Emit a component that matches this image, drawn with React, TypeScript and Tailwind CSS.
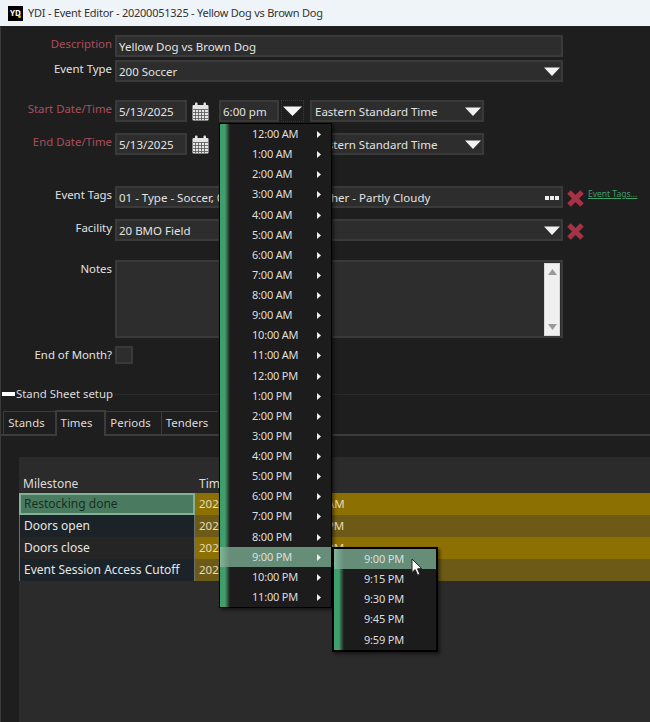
import React from 'react';

const hours = [
  '12:00 AM', '1:00 AM', '2:00 AM', '3:00 AM', '4:00 AM', '5:00 AM', '6:00 AM', '7:00 AM',
  '8:00 AM', '9:00 AM', '10:00 AM', '11:00 AM', '12:00 PM', '1:00 PM', '2:00 PM', '3:00 PM',
  '4:00 PM', '5:00 PM', '6:00 PM', '7:00 PM', '8:00 PM', '9:00 PM', '10:00 PM', '11:00 PM',
];
const minutes = ['9:00 PM', '9:15 PM', '9:30 PM', '9:45 PM', '9:59 PM'];

const milestones = [
  { name: 'Restocking done', time: '2025-05-13 10:00:00.00 AM', cls: 'bg-[#8c7002]' },
  { name: 'Doors open', time: '2025-05-13 10:00:00.00 PM', cls: 'bg-[#6c5a16]' },
  { name: 'Doors close', time: '2025-05-13 10:00:00.00 PM', cls: 'bg-[#8c7002]' },
  { name: 'Event Session Access Cutoff', time: '2025-05-13 10:00:00.00 PM', cls: 'bg-[#6c5a16]' },
];

function Caret({ big }: { big?: boolean }) {
  return big ? (
    <svg width="19" height="10" viewBox="0 0 19 10" className="shrink-0">
      <polygon points="0,0.5 19,0.5 9.5,10" fill="#f6f6f6" />
    </svg>
  ) : (
    <svg width="16" height="9" viewBox="0 0 16 9" className="shrink-0">
      <polygon points="0,0.5 16,0.5 8,9" fill="#f2f2f2" />
    </svg>
  );
}

function RedX() {
  return (
    <svg width="19" height="19" viewBox="0 0 19 19" className="shrink-0">
      <path d="M3 3 L16 16 M16 3 L3 16" stroke="#a63246" strokeWidth="5" />
    </svg>
  );
}

function CalendarIcon() {
  return (
    <svg width="17" height="19" viewBox="0 0 17 19" className="shrink-0">
      <rect x="0.5" y="3" width="16" height="15.5" rx="1" fill="#e4e4e4" />
      <rect x="3" y="0.5" width="2.5" height="4.5" rx="1" fill="#e4e4e4" />
      <rect x="11.5" y="0.5" width="2.5" height="4.5" rx="1" fill="#e4e4e4" />
      <path
        d="M1 7.5H16M1 10.5H16M1 13.5H16M1 16.5H16M3.5 7V18M6.5 7V18M9.5 7V18M12.5 7V18"
        stroke="#555"
        strokeWidth="0.8"
      />
    </svg>
  );
}

function Field({ className, children }: { className?: string; children?: React.ReactNode }) {
  return (
    <div
      className={`flex items-center justify-between h-[22px] bg-[#2d2d2d] border-2 border-[#3a3a3a] pl-[1px] pr-[1px] pt-[1px] text-[11.5px] text-[#e2e2e2] whitespace-nowrap overflow-hidden ${className ?? ''}`}
    >
      {children}
    </div>
  );
}

function Row({
  label,
  danger,
  className,
  children,
}: {
  label: string;
  danger?: boolean;
  className?: string;
  children: React.ReactNode;
}) {
  return (
    <div className={`flex items-start ${className ?? ''}`}>
      <div
        className={`w-[112px] shrink-0 text-right text-[11.4px] leading-[18px] whitespace-nowrap ${danger ? 'text-[#a9505e]' : 'text-[#e2e2e2]'}`}
      >
        {label}
      </div>
      <div className="ml-[3px] flex items-start">{children}</div>
    </div>
  );
}

function Tab({ label, active, className }: { label: string; active?: boolean; className?: string }) {
  return (
    <div
      className={`flex items-center justify-center text-[11.4px] text-[#dcdcdc] border-[#3c3c3c] ${
        active
          ? 'h-[26px] border-t-2 border-x-2 -mb-[2px] relative z-10 bg-[#1e1e1e] pb-[3px] pr-[8px]'
          : 'h-[23px] border-t pr-[6px]'
      } ${className ?? ''}`}
    >
      {label}
    </div>
  );
}

export default function App() {
  return (
    <div className="relative w-[650px] h-[722px] overflow-hidden bg-[#1e1e1e] shadow-[inset_1px_0_0_#3a3a3a] font-['Noto_Sans',sans-serif] text-[12px] leading-[18px]">
      {/* title bar */}
      <div className="flex items-center h-[27px] bg-[#eff4f9] border-b border-[#222] pl-[8px] text-[#333] text-[11px] tracking-[-0.24px]">
        <div className="relative flex items-center justify-center w-[15px] h-[15px] bg-black text-white text-[8px] leading-none font-bold tracking-normal">
          YD
          <i className="absolute right-[2px] bottom-[3px] w-[3px] h-[3px] rounded-full bg-[#e6c422]" />
        </div>
        <span className="ml-[5px] whitespace-nowrap">YDI - Event Editor - 20200051325 - Yellow Dog vs Brown Dog</span>
      </div>

      {/* form */}
      <div className="pt-[8px]">
        <Row label="Description" danger>
          <Field className="w-[448px]">
            <span className="pl-[1px]">Yellow Dog vs Brown Dog</span>
          </Field>
        </Row>
        <Row label="Event Type" className="mt-[3px]">
          <Field className="w-[448px]">
            <span className="pl-[1px]">200 Soccer</span>
            <Caret />
          </Field>
        </Row>
        <Row label="Start Date/Time" danger className="mt-[18px]">
          <Field className="w-[72px]">
            <span className="pl-[1px]">5/13/2025</span>
          </Field>
          <div className="ml-[5px] mt-[2px]"><CalendarIcon /></div>
          <Field className="ml-[10px] w-[60px]">
            <span className="pl-[1px]">6:00 pm</span>
          </Field>
          <div className="ml-[2px] w-[23px] h-[22px] flex items-center justify-center border border-dotted border-[#3a3a3a]">
            <Caret big />
          </div>
          <Field className="ml-[6px] w-[174px]">
            <span className="pl-[2px]">Eastern Standard Time</span>
            <Caret />
          </Field>
        </Row>
        <Row label="End Date/Time" danger className="mt-[11px]">
          <Field className="w-[72px]">
            <span className="pl-[1px]">5/13/2025</span>
          </Field>
          <div className="ml-[5px] mt-[2px]"><CalendarIcon /></div>
          <div className="w-[101px]" />
          <Field className="w-[174px]">
            <span className="pl-[2px]">Eastern Standard Time</span>
            <Caret />
          </Field>
        </Row>
        <Row label="Event Tags" className="mt-[31px]">
          <Field className="w-[448px]">
            <span className="pl-[1px]">01 - Type - Soccer, 02 - Sports, 03 - Weather - Partly Cloudy</span>
            <span className="flex gap-[1px] pr-[1px]">
              <i className="w-[4px] h-[4px] bg-[#eee]" />
              <i className="w-[4px] h-[4px] bg-[#eee]" />
              <i className="w-[4px] h-[4px] bg-[#eee]" />
            </span>
          </Field>
          <div className="ml-[3px] mt-[3px]"><RedX /></div>
          <span className="ml-[3px] mt-[2px] text-[8.5px] leading-[12px] text-[#3f9f68] underline whitespace-nowrap">Event Tags...</span>
        </Row>
        <Row label="Facility" className="mt-[11px]">
          <Field className="w-[448px]">
            <span className="pl-[1px]">20 BMO Field</span>
            <Caret />
          </Field>
          <div className="ml-[3px] mt-[3px]"><RedX /></div>
        </Row>
        <Row label="Notes" className="mt-[19px]">
          <div className="flex justify-end w-[448px] h-[78px] bg-[#2d2d2d] border-2 border-[#3a3a3a] pt-[1px] pr-[1px]">
            <div className="flex flex-col justify-between items-center w-[16px] h-[73px] bg-[#f0f0f0] border border-[#d8d8d8] py-[5px]">
              <svg width="9" height="6" viewBox="0 0 9 6"><polygon points="4.5,0 9,6 0,6" fill="#9a9a9a" /></svg>
              <svg width="9" height="6" viewBox="0 0 9 6"><polygon points="0,0 9,0 4.5,6" fill="#9a9a9a" /></svg>
            </div>
          </div>
        </Row>
        <Row label="End of Month?" className="mt-[8px]">
          <div className="w-[18px] h-[18px] bg-[#2d2d2d] border-2 border-[#3a3a3a]" />
        </Row>
      </div>

      {/* stand sheet section */}
      <div className="flex items-center mt-[21px] h-[18px] pl-[2px]">
        <div className="w-[13px] h-[4px] bg-white shrink-0" />
        <span className="ml-[1px] text-[11.4px] text-[#dcdcdc] whitespace-nowrap">Stand Sheet setup</span>
        <div className="flex-1 h-px bg-[#2a2a2a] ml-[1px]" />
      </div>

      <div className="flex items-end h-[33px] pl-[3px] border-b-2 border-[#3c3c3c]">
        <Tab label="Stands" className="w-[52px] border-l" />
        <Tab label="Times" active className="w-[51px]" />
        <Tab label="Periods" className="w-[56px] border-r" />
        <Tab label="Tenders" className="w-[56px]" />
      </div>

      {/* grid panel */}
      <div className="ml-[19px] mt-[21px] h-[270px] bg-[#2b2b2b] pt-[18px]">
        <div className="flex h-[18px] text-[#dcdcdc]">
          <div className="w-[176px] pl-[4px]">Milestone</div>
          <div className="pl-[4px]">Time</div>
        </div>
        {milestones.map((m, i) => (
          <div key={m.name} className="flex h-[22px]">
            {i === 0 ? (
              <div className="flex items-center w-[176px] bg-[#4a7b60] border-2 border-[#84b097] pl-[3px] text-[#16301f] whitespace-nowrap">
                {m.name}
              </div>
            ) : (
              <div
                className={`flex items-center w-[176px] border-l border-r border-[#6a6f70] pl-[4px] text-[#e6e6e6] whitespace-nowrap ${i === 2 ? 'bg-[#252525]' : 'bg-[#1b2328]'}`}
              >
                {m.name}
              </div>
            )}
            <div className={`flex-1 flex items-center pl-[4px] text-[11.5px] text-[#e6dcb8] whitespace-nowrap ${m.cls}`}>{m.time}</div>
          </div>
        ))}
      </div>

      {/* hour menu */}
      <div className="absolute left-[219px] top-[123px] w-[113px] bg-[#1c1c1c] border border-black shadow-[2px_2px_3px_rgba(0,0,0,0.5)]">
        <div className="absolute left-0 top-0 bottom-0 w-[10px] bg-gradient-to-r from-[#3f9f6c] via-[#3f9f6c] to-[#1c1c1c]" />
        {hours.map((h) => (
          <div
            key={h}
            className={`relative flex items-center h-[20.13px] pl-[32px] text-[11px] tracking-[-0.2px] text-[#dedede] ${h === '9:00 PM' ? 'bg-[#668d78]' : ''}`}
          >
            {h === '9:00 PM' && <div className="absolute left-0 top-0 bottom-0 w-[10px] bg-gradient-to-r from-[#7fb799] to-[#668d78]" />}
            <span className="relative">{h}</span>
            <svg width="4" height="7" viewBox="0 0 4 7" className="absolute right-[10px] top-[7px]">
              <polygon points="0,0 4,3.5 0,7" fill="#eee" />
            </svg>
          </div>
        ))}
      </div>

      {/* minute submenu */}
      <div className="absolute left-[332px] top-[547px] w-[106px] bg-[#1c1c1c] border-2 border-black shadow-[2px_2px_3px_rgba(0,0,0,0.5)]">
        <div className="absolute left-0 top-0 bottom-0 w-[10px] bg-gradient-to-r from-[#3f9f6c] via-[#3f9f6c] to-[#1c1c1c]" />
        {minutes.map((m, i) => (
          <div
            key={m}
            className={`relative flex items-center h-[20.13px] pl-[30px] text-[11px] tracking-[-0.2px] text-[#dedede] ${i === 0 ? 'bg-[#668d78]' : ''}`}
          >
            {i === 0 && <div className="absolute left-0 top-0 bottom-0 w-[10px] bg-gradient-to-r from-[#7fb799] to-[#668d78]" />}
            <span className="relative">{m}</span>
          </div>
        ))}
      </div>

      {/* mouse cursor */}
      <svg width="13" height="19" viewBox="0 0 13 19" className="absolute left-[411px] top-[558px]">
        <path d="M1 1 L1 14.5 L4.2 11.6 L6.6 17.2 L8.9 16.2 L6.5 10.8 L10.8 10.6 Z" fill="#fff" stroke="#222" strokeWidth="1" />
      </svg>
    </div>
  );
}
